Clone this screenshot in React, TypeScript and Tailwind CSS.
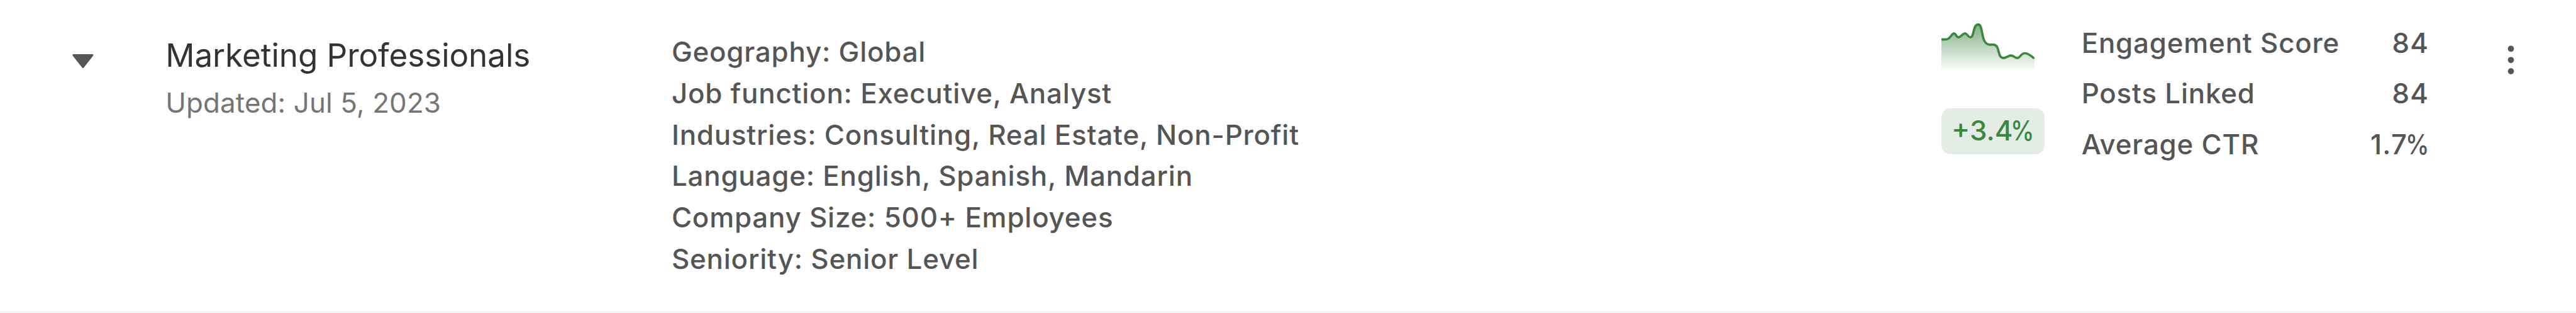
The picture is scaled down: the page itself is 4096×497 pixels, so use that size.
const CRITERIA = [
  "Geography: Global",
  "Job function: Executive, Analyst",
  "Industries: Consulting, Real Estate, Non-Profit",
  "Language: English, Spanish, Mandarin",
  "Company Size: 500+ Employees",
  "Seniority: Senior Level",
];

const STATS = [
  { label: "Engagement Score", value: "84" },
  { label: "Posts Linked", value: "84" },
  { label: "Average CTR", value: "1.7", percent: true },
];

const TREND =
  "M0 28H7C16.5 28 16.5 17.7 22 17.7C25.3 17.7 25.7 24.3 29.7 24.3C34 24.3 36.5 17.7 41 17.7C45.3 17.7 46.2 24.3 50.3 24.3C57.5 24.3 54 2 64 2C73.5 2 67.5 37 84 37H90C103 37 96 60.3 108 60.3C113 60.3 116 56 121 56C125.7 56 127.7 60.3 132 60.3C136.7 60.3 138.3 52 145 52C150 52 154.7 55.3 160 60";

function Sparkline() {
  return (
    <svg viewBox="0 0 162 84" className="h-[76.8px] w-[148.1px]" fill="none">
      <defs>
        <linearGradient id="trend-fill" x1="0" y1="0" x2="0" y2="84" gradientUnits="userSpaceOnUse">
          <stop stopColor="#3b873e" stopOpacity="0.66" />
          <stop offset="1" stopColor="#3b873e" stopOpacity="0" />
        </linearGradient>
      </defs>
      <path d={`${TREND}L162 61V84H0Z`} fill="url(#trend-fill)" />
      <path d={TREND} stroke="#3b873e" strokeWidth="4" strokeLinecap="round" strokeLinejoin="round" />
    </svg>
  );
}

// Inter's percent sign is wide, so it is set a little narrower
function Percent() {
  return <span className="ml-[-9.5px] inline-block origin-right scale-x-[0.86] tracking-normal">%</span>;
}

export default function App() {
  return (
    <div className="flex h-[497px] w-[4096px] items-start overflow-hidden border-b-[3.66px] border-[#f5f5f5] bg-white font-['Inter',sans-serif] text-[43.886px] font-medium tracking-[0.018em] text-[#555]">
      <button type="button" aria-label="Collapse" className="w-[263.3px] shrink-0 pt-[85.5px] pl-[115.2px]">
        <svg viewBox="0 0 37 25" className="h-[22.9px] w-[33.8px]" fill="#555">
          <path d="M2 0H35Q37.6 0.4 36.2 2.8L19.8 23.6Q18.5 25 17.2 23.6L0.8 2.8Q-0.6 0.4 2 0Z" />
        </svg>
      </button>

      <div className="w-[804.6px] shrink-0 pt-[48px]">
        <h2 className="text-[51.2px] leading-[78px] font-normal tracking-[-0.0015em] text-[#333]">Marketing Professionals</h2>
        <p className="mt-[4px] leading-[66px] font-normal tracking-[0.003em] text-[#757575]">Updated: Jul 5, 2023</p>
      </div>

      <ul className="w-[2018.7px] shrink-0 pt-[50px] leading-[65.83px]">
        {CRITERIA.map((line) => (
          <li key={line}>{line}</li>
        ))}
      </ul>

      <div className="flex w-[223.1px] shrink-0 flex-col items-start pt-[36.5px]">
        <Sparkline />
        <span className="mt-[58.6px] h-[73.1px] w-[164.6px] rounded-[14.6px] bg-[#e3ede5] text-center leading-[70.5px] tracking-normal text-[#3b873e]">
          +3.4
          <Percent />
        </span>
      </div>

      <dl className="flex w-[552.5px] shrink-0 flex-col pt-[28px] leading-[80.46px]">
        {STATS.map(({ label, value, percent }) => (
          <div key={label} className="flex justify-between">
            <dt>{label}</dt>
            <dd className="tracking-[0.025em]">
              {value}
              {percent && <Percent />}
            </dd>
          </div>
        ))}
      </dl>

      <button type="button" aria-label="More actions" className="pt-[72px] pl-[125px]">
        <svg viewBox="0 0 12 51" className="h-[46.6px] w-[11px]" fill="#555">
          <circle cx="6" cy="6" r="5.33" />
          <circle cx="6" cy="25.5" r="5.33" />
          <circle cx="6" cy="45" r="5.33" />
        </svg>
      </button>
    </div>
  );
}
